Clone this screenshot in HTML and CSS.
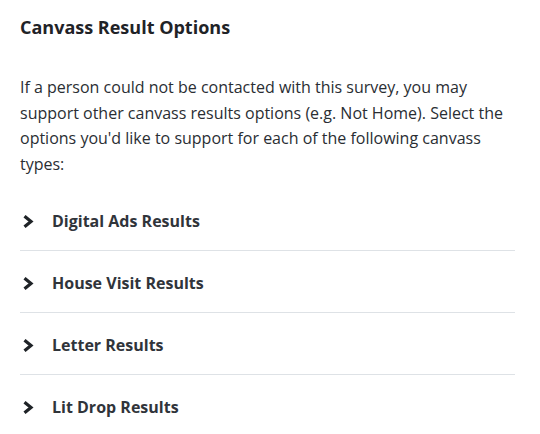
FILE: index.html
```html
<!DOCTYPE html>
<html lang="en">
<head>
<meta charset="utf-8">
<title>Canvass Result Options</title>
<link rel="stylesheet" href="styles.css">
</head>
<body>
<main class="panel">
  <h2 class="panel-title">Canvass Result Options</h2>
  <p class="panel-text">If a person could not be contacted with this survey, you may support other canvass results options (e.g. Not Home). Select the options you'd like to support for each of the following canvass types:</p>
  <ul class="result-list">
    <li class="result-item">
      <svg class="chevron" viewBox="0 0 13 13" width="13" height="13" aria-hidden="true"><polyline points="3.5,1.2 10,6.5 3.5,11.8"/></svg>
      <span class="result-label">Digital Ads Results</span>
    </li>
    <li class="result-item">
      <svg class="chevron" viewBox="0 0 13 13" width="13" height="13" aria-hidden="true"><polyline points="3.5,1.2 10,6.5 3.5,11.8"/></svg>
      <span class="result-label">House Visit Results</span>
    </li>
    <li class="result-item">
      <svg class="chevron" viewBox="0 0 13 13" width="13" height="13" aria-hidden="true"><polyline points="3.5,1.2 10,6.5 3.5,11.8"/></svg>
      <span class="result-label">Letter Results</span>
    </li>
    <li class="result-item">
      <svg class="chevron" viewBox="0 0 13 13" width="13" height="13" aria-hidden="true"><polyline points="3.5,1.2 10,6.5 3.5,11.8"/></svg>
      <span class="result-label">Lit Drop Results</span>
    </li>
  </ul>
</main>
</body>
</html>
```
FILE: styles.css
```css
html, body {
  margin: 0;
  padding: 0;
  background: #ffffff;
}

body {
  font-family: "Open Sans", "Noto Sans", sans-serif;
  color: #212529;
}

.panel {
  padding: 15px 25px 0 20px;
}

.panel-title {
  margin: 0;
  font-size: 18px;
  line-height: 24px;
  font-weight: 700;
  color: #1f2327;
}

.panel-text {
  margin: 36px 0 0;
  font-size: 16px;
  line-height: 25.6px;
  color: #2a2e33;
}

.result-list {
  list-style: none;
  margin: 12px 0 0;
  padding: 0;
}

.result-item {
  display: flex;
  align-items: center;
  padding: 20px 0 17px;
  border-bottom: 1px solid #dee2e6;
}

.result-item:last-child {
  border-bottom: none;
}

.chevron {
  flex: none;
  margin-left: 1px;
  margin-right: 18px;
  fill: none;
  stroke: #1f2327;
  stroke-width: 3.2;
  stroke-linejoin: miter;
  stroke-linecap: butt;
}

.result-label {
  font-size: 16px;
  line-height: 24px;
  font-weight: 700;
  color: #30343a;
}
```
